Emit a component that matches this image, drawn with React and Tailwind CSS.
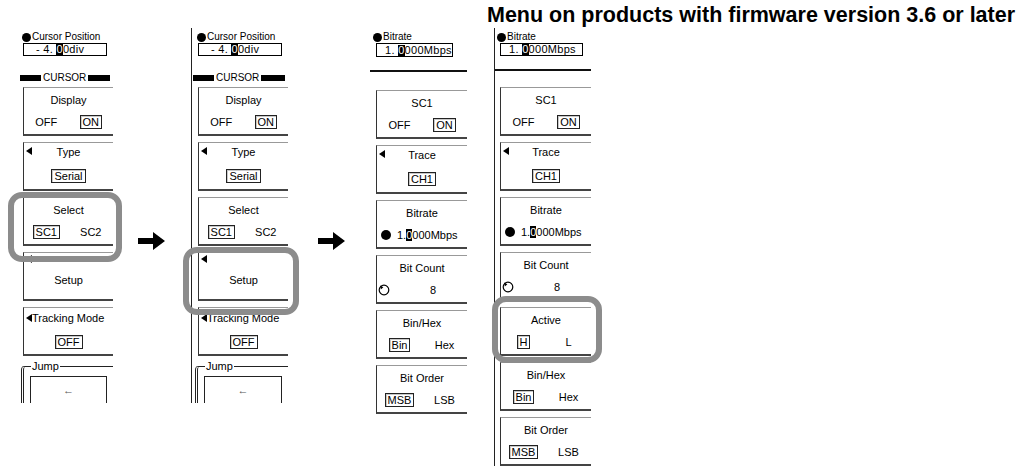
import React from "react";

function Bullet() {
  return <span className="inline-block w-[9px] h-[9px] rounded-full bg-black shrink-0" />;
}

function Tri() {
  return (
    <span className="inline-block w-0 h-0 border-y-[4px] border-y-transparent border-r-[6px] border-r-black shrink-0" />
  );
}

function Val({ children }) {
  return (
    <span className="inline-block border border-[#222] px-[2px] text-[11px] leading-[12px] shadow-[inset_1px_1px_0_#c8c8c8]">
      {children}
    </span>
  );
}

function Header({ label, pre, cur, post, w, bx, ix, pl }) {
  return (
    <>
      <div className={`flex items-center h-[12px] mt-[3px] ${bx} text-[10px] leading-[12px] gap-[1px]`}>
        <Bullet />
        <span>{label}</span>
      </div>
      <div
        className={`${ix} ${w} h-[14px] border-[1.5px] border-black text-[11px] leading-[11px] tracking-[0.3px] ${pl} flex items-center whitespace-pre`}
      >
        <span>{pre}</span>
        <span className="bg-black text-white">{cur}</span>
        <span>{post}</span>
      </div>
      <div className="mt-[13px] h-[2px] bg-[#111]" />
    </>
  );
}

function CursorBar({ off }) {
  return (
    <div className={`flex items-center h-[8px] mt-[5px] ${off} text-[10px] leading-[10px]`}>
      <span className="w-[21px] h-[6px] bg-black" />
      <span className="px-[2px]">CURSOR</span>
      <span className="flex-1 h-[6px] bg-black mr-[3px]" />
    </div>
  );
}

function Box({ children, first, off }) {
  return (
    <div
      className={`${off} ${first ? "mt-[5px]" : "mt-[6px]"} h-[49px] shrink-0 border-t border-l border-b-2 border-t-[#999] border-l-[#333] border-b-[#444] flex flex-col text-[11px]`}
    >
      {children}
    </div>
  );
}

function Title({ children }) {
  return <div className="mt-[5px] h-[14px] leading-[14px] text-center">{children}</div>;
}

function TwoOpt({ title, a, b, sel, first, off }) {
  return (
    <Box first={first} off={off}>
      <Title>{title}</Title>
      <div className="mt-[7px] h-[15px] grid grid-cols-2 items-center justify-items-center leading-[12px]">
        {sel === "a" ? <Val>{a}</Val> : <span>{a}</span>}
        {sel === "b" ? <Val>{b}</Val> : <span>{b}</span>}
      </div>
    </Box>
  );
}

function TriOne({ title, value, off }) {
  return (
    <Box off={off}>
      <div className="mt-[2px] h-[14px] grid grid-cols-[10px_1fr_10px] items-center">
        <span className="pl-[2px] flex -mt-[3px]">
          <Tri />
        </span>
        <span className="text-center leading-[14px]">{title}</span>
        <span />
      </div>
      <div className="mt-[9px] h-[15px] flex items-center justify-center">
        <Val>{value}</Val>
      </div>
    </Box>
  );
}

function Setup({ off }) {
  return (
    <Box off={off}>
      <div className="mt-[2px] pl-[2px] h-[8px] flex">
        <Tri />
      </div>
      <div className="mt-[10px] text-center leading-[14px]">Setup</div>
    </Box>
  );
}

function Tracking({ off }) {
  return (
    <Box off={off}>
      <div className="mt-[4px] h-[12px] flex items-center pl-[2px] leading-[12px]">
        <Tri />
        <span>Tracking Mode</span>
      </div>
      <div className="mt-[10px] h-[15px] flex items-center justify-center">
        <Val>OFF</Val>
      </div>
    </Box>
  );
}

function Jump({ off }) {
  return (
    <fieldset
      className={`${off} mt-[4px] h-[60px] shrink-0 border-t border-l-[3px] [border-left-style:double] border-[#222] rounded-tl-[4px] pl-[6px] pr-[6px]`}
    >
      <legend className="ml-[1px] px-[1px] text-[11px] leading-[12px]">Jump</legend>
      <div className="mt-[4px] h-[50px] border-[1.5px] border-[#222] flex justify-center pt-[7px] text-[11px] leading-[12px] text-[#555]">
        ←
      </div>
    </fieldset>
  );
}

function Knob() {
  return (
    <svg width="12" height="12" viewBox="0 0 12 12">
      <circle cx="6" cy="6" r="4.8" fill="none" stroke="#000" strokeWidth="1.2" />
      <path d="M2.2 1.6 L5.4 3.2 L2.8 5.4 Z" fill="#000" />
    </svg>
  );
}

function BitrateBox({ off }) {
  return (
    <Box off={off}>
      <Title>Bitrate</Title>
      <div className="mt-[7px] h-[15px] flex items-center pl-[4px] gap-[6px] leading-[12px] whitespace-pre">
        <span className="w-[10px] h-[10px] rounded-full bg-black" />
        <span>
          1.
          <span className="bg-black text-white">0</span>
          000Mbps
        </span>
      </div>
    </Box>
  );
}

function BitCount({ off }) {
  return (
    <Box off={off}>
      <Title>Bit Count</Title>
      <div className="mt-[7px] h-[15px] flex items-center pl-[1px] leading-[12px]">
        <Knob />
        <span className="ml-[40px]">8</span>
      </div>
    </Box>
  );
}

function Arrow({ ml, w }) {
  return (
    <div className={`${w} shrink-0 pt-[204px]`}>
      <svg className={ml} width="27" height="18" viewBox="0 0 27 18">
        <path d="M0 6 H15 V0 L27 9 L15 18 V12 H0 Z" fill="#000" />
      </svg>
    </div>
  );
}

function CursorPanel({ bordered }) {
  const off = "ml-[6px]";
  return (
    <div
      className={`flex flex-col shrink-0 h-[375px] overflow-hidden ${
        bordered ? "w-[97px] border-l border-[#222]" : "w-[96px]"
      }`}
    >
      <Header
        label="Cursor Position"
        pre="- 4. "
        cur="0"
        post="0div"
        w="w-[84px]"
        bx="ml-[5px]"
        ix={off}
        pl="pl-[12px]"
      />
      <CursorBar off={bordered ? "ml-[1px]" : "ml-[3px]"} />
      <TwoOpt first off={off} title="Display" a="OFF" b="ON" sel="b" />
      <TriOne off={off} title="Type" value="Serial" />
      <TwoOpt off={off} title="Select" a="SC1" b="SC2" sel="a" />
      <Setup off={off} />
      <Tracking off={off} />
      <Jump off={bordered ? "ml-[3px]" : "ml-[4px]"} />
    </div>
  );
}

function SerialPanel({ active, bordered }) {
  const off = bordered ? "ml-[5px]" : "ml-[6px]";
  return (
    <div
      className={`flex flex-col shrink-0 w-[97px] ${
        bordered ? "h-[438px] border-l border-[#222]" : "h-[390px]"
      } overflow-hidden`}
    >
      <Header
        label="Bitrate"
        pre="1. "
        cur="0"
        post="000Mbps"
        w={bordered ? "w-[83px]" : "w-[77px]"}
        bx={bordered ? "ml-[2px]" : "ml-[3px]"}
        ix={off}
        pl="pl-[8px]"
      />
      <div className="h-[8px] mt-[5px]" />
      <TwoOpt first off={off} title="SC1" a="OFF" b="ON" sel="b" />
      <TriOne off={off} title="Trace" value="CH1" />
      <BitrateBox off={off} />
      <BitCount off={off} />
      {active && <TwoOpt off={off} title="Active" a="H" b="L" sel="a" />}
      <TwoOpt off={off} title="Bin/Hex" a="Bin" b="Hex" sel="a" />
      <TwoOpt off={off} title="Bit Order" a="MSB" b="LSB" sel="a" />
    </div>
  );
}

export default function App() {
  return (
    <div className="relative w-[1021px] h-[466px] bg-white overflow-hidden text-black font-['Liberation_Sans',Arial,sans-serif]">
      <div className="h-[28px] pl-[487px] pt-[3px] text-[21.5px] leading-[24px] font-bold whitespace-nowrap">
        Menu on products with firmware version 3.6 or later
      </div>
      <div className="flex items-start pl-[17px]">
        <CursorPanel />
        <Arrow w="w-[78px]" ml="ml-[25px]" />
        <CursorPanel bordered />
        <Arrow w="w-[82px]" ml="ml-[30px]" />
        <SerialPanel />
        <div className="w-[27px] shrink-0" />
        <SerialPanel active bordered />
      </div>

      <div className="absolute left-[8px] top-[192px] w-[114px] h-[70px] border-[6px] border-[#8c8c8c] rounded-[14px]" />
      <div className="absolute left-[183px] top-[247px] w-[116px] h-[68px] border-[6px] border-[#8c8c8c] rounded-[14px]" />
      <div className="absolute left-[492px] top-[296px] w-[110px] h-[67px] border-[6px] border-[#8c8c8c] rounded-[14px]" />
    </div>
  );
}
